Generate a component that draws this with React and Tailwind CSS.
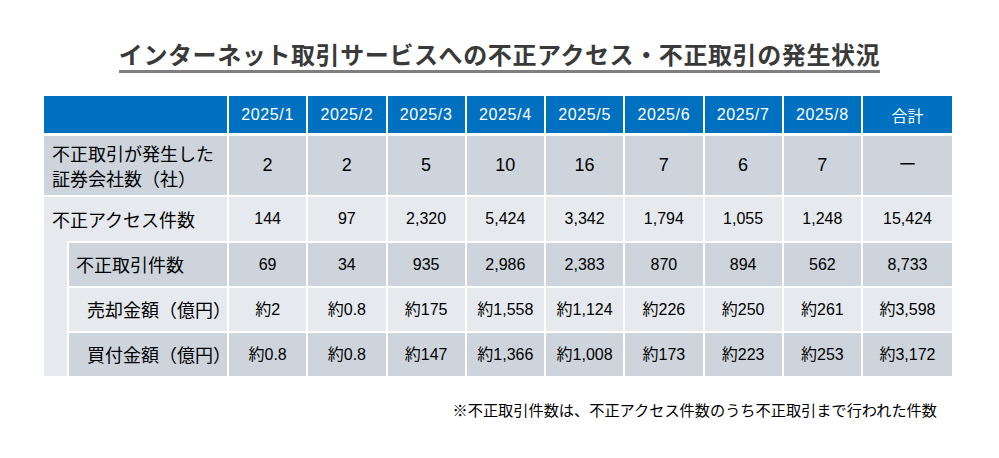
const months = ["2025/1", "2025/2", "2025/3", "2025/4", "2025/5", "2025/6", "2025/7", "2025/8"];

const companies = ["2", "2", "5", "10", "16", "7", "6", "7", "ー"];
const access = ["144", "97", "2,320", "5,424", "3,342", "1,794", "1,055", "1,248", "15,424"];
const trades = ["69", "34", "935", "2,986", "2,383", "870", "894", "562", "8,733"];
const sells = ["約2", "約0.8", "約175", "約1,558", "約1,124", "約226", "約250", "約261", "約3,598"];
const buys = ["約0.8", "約0.8", "約147", "約1,366", "約1,008", "約173", "約223", "約253", "約3,172"];

const cjk = { fontFamily: '"Noto Sans CJK JP", sans-serif' };
const num = { fontFamily: '"Liberation Sans", "Noto Sans CJK JP", sans-serif' };

const outerCols = "grid grid-cols-[183px_repeat(8,minmax(0,1fr))_89px] gap-x-[2px]";
const innerCols = "grid grid-cols-[158px_repeat(8,minmax(0,1fr))_89px] gap-x-[2px]";

const Cells = ({ values, bg, big }) =>
  values.map((v, i) => (
    <div
      key={i}
      className={`${bg} flex items-center justify-center text-black ${big ? "text-[18px]" : "text-[16px]"}`}
      style={num}
    >
      {v}
    </div>
  ));

export default function App() {
  return (
    <div className="w-[999px] h-[458px] bg-white overflow-hidden" style={cjk}>
      {/* title */}
      <div className="flex justify-center pt-[38px] h-[96px]">
        <h1 className="h-[35px] text-[24px] font-bold leading-[31px] text-[#3a3a3a] border-b-[3px] border-[#7f7f7f] tracking-[0.6px]">
          インターネット取引サービスへの不正アクセス・不正取引の発生状況
        </h1>
      </div>

      {/* table */}
      <div className="ml-[44px] w-[908px]">
        <div className={`${outerCols} h-[37px]`}>
          <div className="bg-[#0070c0]" />
          {months.map((m) => (
            <div key={m} className="bg-[#0070c0] flex items-center justify-center text-white text-[16px] tracking-[0.6px]" style={num}>
              {m}
            </div>
          ))}
          <div className="bg-[#0070c0] flex items-center justify-center text-white text-[16px]">合計</div>
        </div>

        <div className={`${outerCols} h-[59px] mt-[3px]`}>
          <div className="bg-[#ced4dc] pl-[8px] flex flex-col justify-center text-[18px] leading-[25px] text-black">
            <span>不正取引が発生した</span>
            <span>証券会社数（社）</span>
          </div>
          <Cells values={companies} bg="bg-[#ced4dc]" big />
        </div>

        <div className={`${outerCols} h-[44px] mt-[2px]`}>
          <div className="bg-[#e6e9ed] pl-[8px] flex items-center text-[18px] text-black">不正アクセス件数</div>
          <Cells values={access} bg="bg-[#e6e9ed]" />
        </div>

        <div className="flex gap-x-[2px]">
          <div className="w-[23px] bg-[#e6e9ed]" />
          <div className="flex-1 flex flex-col gap-y-[2px] pt-[2px]">
            <div className={`${innerCols} h-[43px]`}>
              <div className="bg-[#ced4dc] pl-[7px] flex items-center text-[18px] text-black">不正取引件数</div>
              <Cells values={trades} bg="bg-[#ced4dc]" />
            </div>
            <div className={`${innerCols} h-[43px]`}>
              <div className="bg-[#e6e9ed] pl-[18px] flex items-center text-[18px] text-black">売却金額（億円）</div>
              <Cells values={sells} bg="bg-[#e6e9ed]" />
            </div>
            <div className={`${innerCols} h-[43px]`}>
              <div className="bg-[#ced4dc] pl-[18px] flex items-center text-[18px] text-black">買付金額（億円）</div>
              <Cells values={buys} bg="bg-[#ced4dc]" />
            </div>
          </div>
        </div>
      </div>

      {/* note */}
      <div className="w-[937px] mt-[23px] text-right text-[15.2px] leading-[20px] text-black">
        ※不正取引件数は、不正アクセス件数のうち不正取引まで行われた件数
      </div>
    </div>
  );
}
